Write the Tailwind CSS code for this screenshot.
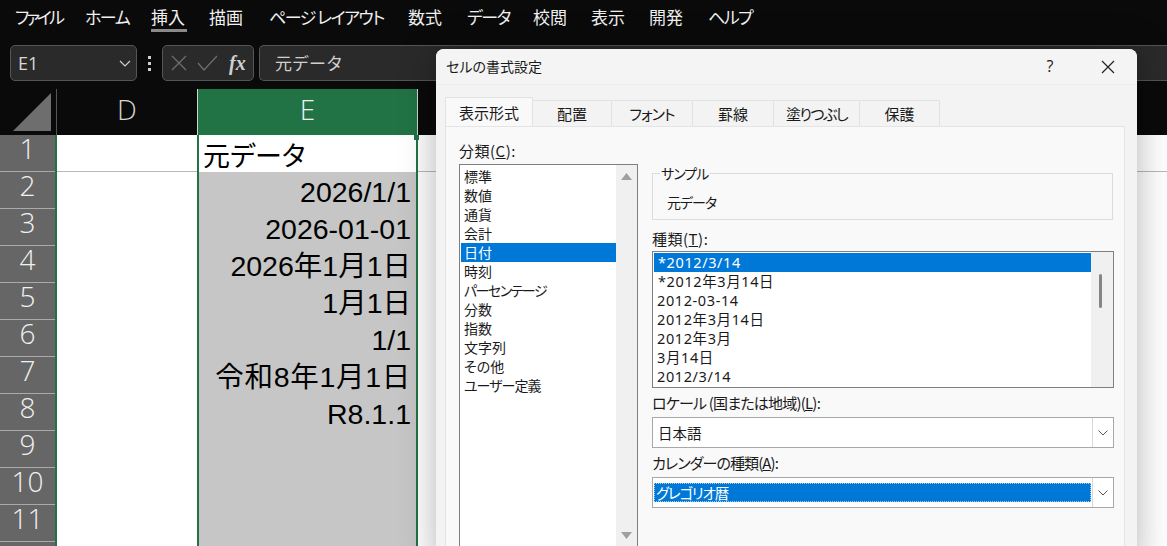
<!DOCTYPE html>
<html lang="ja">
<head>
  <meta charset="UTF-8">
  <title>セルの書式設定</title>
  <script src="https://cdn.jsdelivr.net/npm/@tailwindcss/browser@4"></script>
</head>
<body class="relative w-[1167px] h-[546px] overflow-hidden bg-[#0a0a0a] font-['Noto_Sans_CJK_JP',sans-serif]">

  <!-- メニュー -->
  <nav class="h-[45px] flex items-start pt-[5px] pl-[15px] text-[#f0f0f0] text-[17px] leading-[24px] [font-feature-settings:'palt']">
    <span class="w-[70px] tracking-[-3px]">ファイル</span>
    <span class="w-[66px] tracking-[-1.5px]">ホーム</span>
    <span class="w-[58px] relative">挿入<i class="absolute left-0 top-[24px] w-[36px] h-[3px] bg-[#8a8a8a]"></i></span>
    <span class="w-[60px]">描画</span>
    <span class="w-[139px] tracking-[-1.5px]">ページ レイアウト</span>
    <span class="w-[59px]">数式</span>
    <span class="w-[66px] tracking-[-1.5px]">データ</span>
    <span class="w-[58px]">校閲</span>
    <span class="w-[58px]">表示</span>
    <span class="w-[59px]">開発</span>
    <span class="tracking-[-1.5px]">ヘルプ</span>
  </nav>

  <!-- 数式バー -->
  <div class="h-[36px] flex pl-[10px] gap-[5px]">
    <div class="w-[127px] flex items-center justify-between pl-[7px] pr-[4px] bg-[#2a2a2a] border border-[#555] rounded-[5px] text-[#d8d8d8] text-[18px] font-['Open_Sans']">
      E1
      <svg class="w-[14px] h-[14px]" viewBox="0 0 14 14" fill="none" stroke="#d0d0d0" stroke-width="1.2"><path d="M2 5l5 5 5-5"/></svg>
    </div>
    <div class="w-[15px] flex flex-col items-center justify-center gap-[3px]">
      <i class="w-[3px] h-[3px] bg-[#d0d0d0]"></i><i class="w-[3px] h-[3px] bg-[#d0d0d0]"></i><i class="w-[3px] h-[3px] bg-[#d0d0d0]"></i>
    </div>
    <div class="w-[92px] flex items-center pl-[7px] gap-[9px] bg-[#2a2a2a] border border-[#555] rounded-[5px]">
      <svg class="w-[18px] h-[18px]" viewBox="0 0 18 18" fill="none" stroke="#6e6e6e" stroke-width="1.3"><path d="M2 2l14 14M16 2L2 16"/></svg>
      <svg class="w-[20px] h-[18px]" viewBox="0 0 20 18" fill="none" stroke="#6e6e6e" stroke-width="1.3"><path d="M1 9l6 7L20 2"/></svg>
      <span class="ml-[3px] text-[#d0d0d0] text-[20px] italic font-bold font-['Liberation_Serif']">fx</span>
    </div>
    <div class="flex-1 flex items-center pl-[15px] bg-[#2a2a2a] border-y border-l border-[#555] rounded-l-[5px] text-[#d0d0d0] text-[17px]">元データ</div>
  </div>

  <!-- 列見出し -->
  <div class="mt-[8px] h-[46px] flex text-[28px] font-light font-['Open_Sans'] leading-[40px]">
    <div class="w-[57px] flex items-end justify-end pr-[4px] pb-[3px] border-r border-[#555]">
      <svg class="w-[40px] h-[40px]" viewBox="0 0 40 40"><path d="M1 39L39 1v38z" fill="#6e6e6e"/></svg>
    </div>
    <div class="w-[140px] text-center text-[#d4d4d4]">D</div>
    <div class="w-[221px] text-center text-[#f0f0f0] bg-[#217346] border-x border-[#c8d8ce]">E</div>
  </div>

  <!-- シート -->
  <div class="h-[420px] bg-white text-black">
    <div class="h-[37px] flex">
      <div class="w-[55px] h-[37px] bg-[#666] border-b border-[#aaa] text-center text-[#f0f0f0] text-[28px] font-light font-['Open_Sans'] leading-[26px]">1</div>
      <div class="w-[2px] bg-[#217346]"></div>
      <div class="w-[140px] border-b border-[#b8b8b8]"></div>
      <div class="w-[221px] border-x-2 border-[#217346] bg-white pl-[4px] text-[27px] leading-[40px] [font-feature-settings:'palt'] relative">元データ<i class="absolute right-[-3px] top-0 w-[5px] h-[5px] bg-[#217346]"></i></div>
      <div class="flex-1 border-b border-[#b8b8b8]"></div>
    </div>
    <div class="flex h-[383px]">
      <div class="w-[55px] bg-[#666] text-center text-[#f0f0f0] text-[28px] font-light font-['Open_Sans'] leading-[26px]">
        <div class="h-[37px] border-b border-[#aaa]">2</div>
        <div class="h-[37px] border-b border-[#aaa]">3</div>
        <div class="h-[37px] border-b border-[#aaa]">4</div>
        <div class="h-[37px] border-b border-[#aaa]">5</div>
        <div class="h-[37px] border-b border-[#aaa]">6</div>
        <div class="h-[37px] border-b border-[#aaa]">7</div>
        <div class="h-[37px] border-b border-[#aaa]">8</div>
        <div class="h-[37px] border-b border-[#aaa]">9</div>
        <div class="h-[37px] border-b border-[#aaa]">10</div>
        <div class="h-[37px] border-b border-[#aaa]">11</div>
        <div class="h-[13px] overflow-hidden">12</div>
      </div>
      <div class="w-[2px] bg-[#217346]"></div>
      <div class="w-[140px]"></div>
      <div class="w-[221px] border-x-2 border-[#217346] bg-[#c6c6c6] pr-[5px] text-right text-[28.5px] leading-[37px] font-['Liberation_Sans','Noto_Sans_CJK_JP',sans-serif]">
        <div class="h-[37px] pt-[2px]">2026/1/1</div>
        <div class="h-[37px] pt-[2px]">2026-01-01</div>
        <div class="h-[37px] pt-[2px]">2026年1月1日</div>
        <div class="h-[37px] pt-[2px]">1月1日</div>
        <div class="h-[37px] pt-[2px]">1/1</div>
        <div class="h-[37px] pt-[2px] tracking-[0.7px]">令和8年1月1日</div>
        <div class="h-[37px] pt-[2px]">R8.1.1</div>
      </div>
    </div>
  </div>

  <!-- ダイアログ -->
  <div class="absolute left-[436px] top-[49px] w-[701px] h-[520px] bg-[#f3f3f3] rounded-t-[8px] shadow-[0_0_36px_rgba(0,0,0,0.3)] text-[#1a1a1a] text-[14px] leading-[19px] [font-feature-settings:'palt']">
    <div class="h-[36px] flex items-center pl-[10px] bg-[#f4f4f4] border-b border-[#ededed] rounded-t-[8px]">
      <span class="flex-1">セルの書式設定</span>
      <span class="w-[20px] text-center text-[16px] font-['Open_Sans']">?</span>
      <svg class="ml-[41px] mr-[22px] w-[14px] h-[14px]" viewBox="0 0 14 14" fill="none" stroke="#222" stroke-width="1.2"><path d="M1 1l12 12M13 1L1 13"/></svg>
    </div>
    <!-- タブ -->
    <div class="ml-[9px] mt-[12px] h-[29px] flex items-end text-[15px]">
      <div class="w-[88px] h-[29px] flex items-center justify-center bg-[#f9f9f9] border border-b-0 border-[#e2e2e2]">表示形式</div>
      <div class="w-[79px] h-[26px] flex items-center justify-center border-r border-t border-[#e2e2e2]">配置</div>
      <div class="w-[81px] h-[26px] flex items-center justify-center border-r border-t border-[#e2e2e2] tracking-[-1px]">フォント</div>
      <div class="w-[81px] h-[26px] flex items-center justify-center border-r border-t border-[#e2e2e2]">罫線</div>
      <div class="w-[86px] h-[26px] flex items-center justify-center border-r border-t border-[#e2e2e2] tracking-[-1.5px]">塗りつぶし</div>
      <div class="w-[80px] h-[26px] flex items-center justify-center border-r border-t border-[#e2e2e2]">保護</div>
    </div>
    <!-- パネル -->
    <div class="ml-[9px] w-[680px] h-[430px] flex bg-[#f9f9f9] border border-[#e4e4e4] pl-[13px] pt-[14px]">
      <!-- 分類 -->
      <div class="w-[179px] mr-[14px]">
        <div class="h-[23px] text-[15px] tracking-[0.5px]">分類(<u>C</u>):</div>
        <div class="h-[400px] flex bg-white border border-[#7f7f7f]">
          <div class="flex-1 pt-[2px] pl-[1px]">
            <div class="h-[19px] pl-[3px]">標準</div>
            <div class="h-[19px] pl-[3px]">数値</div>
            <div class="h-[19px] pl-[3px]">通貨</div>
            <div class="h-[19px] pl-[3px]">会計</div>
            <div class="h-[19px] pl-[3px] bg-[#0078d7] text-white">日付</div>
            <div class="h-[19px] pl-[3px]">時刻</div>
            <div class="h-[19px] pl-[3px] tracking-[-1.5px]">パーセンテージ</div>
            <div class="h-[19px] pl-[3px]">分数</div>
            <div class="h-[19px] pl-[3px]">指数</div>
            <div class="h-[19px] pl-[3px]">文字列</div>
            <div class="h-[19px] pl-[3px]">その他</div>
            <div class="h-[19px] pl-[3px] tracking-[-1px]">ユーザー定義</div>
          </div>
          <div class="w-[21px] bg-[#f0f0f0] flex flex-col items-center pt-[8px]">
            <svg class="w-[11px] h-[7px]" viewBox="0 0 11 7"><path d="M5.5 0L11 7H0z" fill="#a0a0a0"/></svg>
            <svg class="mt-[352px] w-[11px] h-[7px]" viewBox="0 0 11 7"><path d="M0 0h11L5.5 7z" fill="#a0a0a0"/></svg>
          </div>
        </div>
      </div>
      <!-- 右側 -->
      <div class="w-[462px]">
        <div class="relative mt-[32px] h-[47px] w-[461px] border border-[#dcdcdc]">
          <span class="absolute left-[7px] top-[-10px] px-[1px] bg-[#f9f9f9] tracking-[-1px]">サンプル</span>
          <div class="pl-[14px] pt-[19px] tracking-[-1px]">元データ</div>
        </div>
        <div class="mt-[8px] h-[23px] leading-[21px] text-[15px] tracking-[0.5px]">種類(<u>T</u>):</div>
        <div class="h-[137px] flex bg-white border border-[#7f7f7f] text-[14.5px] tracking-[0.6px] font-['Noto_Sans','Noto_Sans_CJK_JP',sans-serif]">
          <div class="flex-1 pl-[1px] pt-[1px]">
            <div class="h-[19px] pl-[4px] bg-[#0078d7] text-white">*2012/3/14</div>
            <div class="h-[19px] pl-[4px]">*2012年3月14日</div>
            <div class="h-[19px] pl-[3px]">2012-03-14</div>
            <div class="h-[19px] pl-[3px]">2012年3月14日</div>
            <div class="h-[19px] pl-[3px]">2012年3月</div>
            <div class="h-[19px] pl-[3px]">3月14日</div>
            <div class="h-[19px] pl-[3px]">2012/3/14</div>
          </div>
          <div class="w-[22px] bg-[#f0f0f0] pt-[22px] pl-[8px]">
            <div class="w-[3px] h-[34px] rounded-full bg-[#858585]"></div>
          </div>
        </div>
        <div class="mt-[4px] h-[25px] leading-[21px] text-[15px] tracking-[-0.8px]">ロケール (国または地域)(<u>L</u>):</div>
        <div class="h-[31px] flex items-center bg-white border border-[#a8a8a8] pl-[5px] text-[14.5px]">
          <span class="flex-1">日本語</span>
          <div class="w-[21px] h-[29px] flex items-center justify-center border-l border-[#d8d8d8] bg-white">
            <svg class="w-[10px] h-[6px]" viewBox="0 0 10 6" fill="none" stroke="#555"><path d="M.5.5L5 5 9.5.5"/></svg>
          </div>
        </div>
        <div class="mt-[4px] h-[25px] leading-[21px] text-[15px] tracking-[-0.9px]">カレンダーの種類(<u>A</u>):</div>
        <div class="h-[31px] flex items-center bg-white border border-[#a8a8a8] pl-[1px] text-[14.5px]">
          <span class="flex-1 h-[19px] pl-[2px] bg-[#0078d7] text-white tracking-[-1.2px] outline-1 outline-dotted outline-offset-[-1px] outline-[#a9cdea]">グレゴリオ暦</span>
          <div class="ml-[1px] w-[21px] h-[29px] flex items-center justify-center border-l border-[#d8d8d8] bg-white">
            <svg class="w-[10px] h-[6px]" viewBox="0 0 10 6" fill="none" stroke="#555"><path d="M.5.5L5 5 9.5.5"/></svg>
          </div>
        </div>
      </div>
    </div>
  </div>
</body>
</html>
